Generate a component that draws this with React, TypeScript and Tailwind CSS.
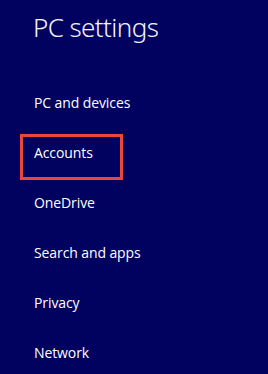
const items = ['PC and devices', 'Accounts', 'OneDrive', 'Search and apps', 'Privacy', 'Network']

export default function App() {
  return (
    <div className="w-[268px] h-[374px] overflow-hidden bg-[#010160] text-white" style={{ fontFamily: '"Open Sans", "Noto Sans", sans-serif' }}>
      {/* Title */}
      <h1
        className="pl-[33px] pt-[10px] h-[77px] text-[26px] font-light leading-[34px] tracking-[-0.6px] text-[#f2f2f8]"
        style={{ fontFamily: '"Noto Sans", "Open Sans", sans-serif' }}
      >
        PC settings
      </h1>

      {/* Menu */}
      <div className="flex flex-col">
        {items.map((item) => (
          <div key={item} className="relative h-[50px] flex items-center pl-[34px] text-[14px] tracking-[-0.1px]">
            {item}
            {item === 'Accounts' && (
              <div className="absolute left-[20px] top-[7px] w-[103px] h-[46px] border-[3px] border-[#e8473c]" />
            )}
          </div>
        ))}
      </div>
    </div>
  )
}
